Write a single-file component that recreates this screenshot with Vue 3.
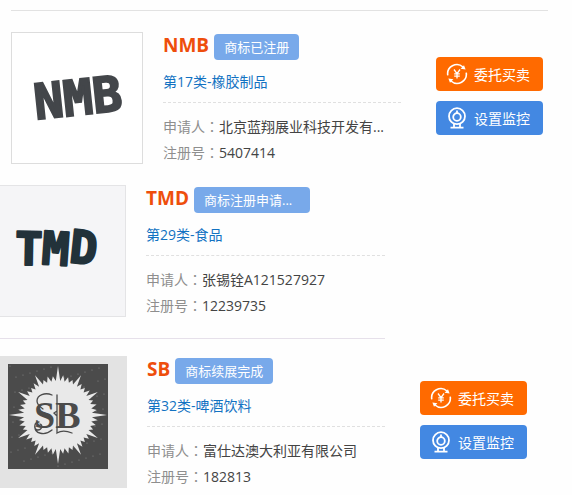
<template>
  <main class="trademark-list">
    <article
      v-for="item in trademarks"
      :key="item.number"
      :class="['trademark', item.id]"
    >
      <div class="thumb">
        <svg v-if="item.id === 'nmb'" viewBox="0 0 130 130" role="img" aria-label="NMB">
          <text class="mark-nmb" x="66" y="82" text-anchor="middle" transform="rotate(-6 66 66)">NMB</text>
        </svg>

        <svg v-else-if="item.id === 'tmd'" viewBox="0 0 125 130" role="img" aria-label="TMD">
          <g class="mark-tmd">
            <text x="15" y="79" transform="rotate(1 30 60)">T</text>
            <text x="42" y="79" transform="rotate(4 55 60)">M</text>
            <text x="70" y="78" transform="rotate(6 85 60)">D</text>
          </g>
        </svg>

        <svg v-else viewBox="0 0 127 132" role="img" aria-label="SB">
          <rect width="127" height="132" fill="#e3e3e3" />
          <rect x="8" y="8" width="100" height="105" fill="#4b4b4b" />
          <circle
            v-for="(dot, i) in specks"
            :key="i"
            :cx="dot.x"
            :cy="dot.y"
            r="0.6"
            fill="#888"
          />
          <polygon :points="sunburst" fill="#e9e9e9" />
          <text class="mark-sb" x="34" y="72">SB</text>
          <g fill="none" stroke="#4b4b4b" stroke-width="1.3" stroke-linecap="round">
            <path d="M52 39c-7-3-15 0-15 6 0 4 3 6 6 8" />
            <path d="M39 66c-5 0-6 8-1 8 4 0 5-5 2-6M35 70c-1 8 10 10 17 4" />
            <path d="M57 39v38c5-3 10-2 15 0M57 60l-3-3 3-2" />
          </g>
        </svg>
      </div>

      <div class="info">
        <header class="heading">
          <h2 class="name">{{ item.name }}</h2>
          <span :class="['status', { 'status-long': item.longStatus }]">{{ item.status }}</span>
        </header>
        <a class="category" href="#">{{ item.category }}</a>
        <dl class="details">
          <div class="detail">
            <dt>申请人<span class="colon">：</span></dt>
            <dd>{{ item.applicant }}</dd>
          </div>
          <div class="detail">
            <dt>注册号<span class="colon">：</span></dt>
            <dd>{{ item.number }}</dd>
          </div>
        </dl>
      </div>

      <div class="actions">
        <template v-if="item.actions">
          <button type="button" class="action trade">
            <svg class="icon" viewBox="0 0 22 22" aria-hidden="true">
              <g fill="none" stroke="#fff" stroke-width="1.6">
                <path d="M1.8 12.4A9.2 9.2 0 0 1 17 4" />
                <path d="M20.2 9.6A9.2 9.2 0 0 1 5 18" />
                <path d="M8 6.5 11 10.6l3-4.1M11 10.6v5M8.2 10.8h5.6M8.2 13.2h5.6" stroke-width="1.3" />
              </g>
              <path d="M19.6 6.6 14.6 5.8 18 2.2zM2.4 15.4l5 .8L4 19.8z" fill="#fff" />
            </svg>
            委托买卖
          </button>
          <button type="button" class="action monitor">
            <svg class="icon" viewBox="0 0 22 22" aria-hidden="true">
              <g fill="none" stroke="#fff" stroke-width="1.8">
                <circle cx="11" cy="9.2" r="8" />
                <circle cx="11" cy="10" r="3.8" />
                <path d="M11 3.4v3M8 16.5v4M14 16.5v4M4.5 20.6h13" />
              </g>
            </svg>
            设置监控
          </button>
        </template>
      </div>
    </article>
  </main>
</template>

<script setup>
const trademarks = [
  {
    id: 'nmb',
    name: 'NMB',
    status: '商标已注册',
    category: '第17类-橡胶制品',
    applicant: '北京蓝翔展业科技开发有...',
    number: '5407414',
    actions: true
  },
  {
    id: 'tmd',
    name: 'TMD',
    status: '商标注册申请...',
    longStatus: true,
    category: '第29类-食品',
    applicant: '张锡铨A121527927',
    number: '12239735',
    actions: false
  },
  {
    id: 'sb',
    name: 'SB',
    status: '商标续展完成',
    category: '第32类-啤酒饮料',
    applicant: '富仕达澳大利亚有限公司',
    number: '182813',
    actions: true
  }
];

// rays alternate between long and short tips around the disc
const RAYS = 48;
const sunburst = Array.from({ length: RAYS * 2 }, (_, i) => {
  const angle = (i * Math.PI) / RAYS - Math.PI / 2;
  let radius = 34;
  if (i % 2 === 0) {
    radius = i % 24 === 0 ? 49 : i % 8 === 0 ? 46 : 38 + (i % 3);
  }
  return `${(58 + radius * Math.cos(angle)).toFixed(1)},${(59 + radius * Math.sin(angle)).toFixed(1)}`;
}).join(' ');

const specks = Array.from({ length: 90 }, (_, i) => ({
  x: 10 + ((i * 37) % 96),
  y: 10 + ((i * 61) % 101)
}));
</script>

<style>
body {
  margin: 0;
  background: #fefefe;
}
</style>

<style scoped>
.trademark-list {
  padding-top: 10px;
  overflow: hidden;
  font-family: "Open Sans", "Noto Sans CJK SC", sans-serif;
  font-size: 14px;
  line-height: 26px;
  color: #444;
}

.trademark {
  display: flex;
  align-items: flex-start;
}
.trademark.nmb {
  margin: 0 24px 0 11px;
  padding: 21px 5px 19px 0;
  border-top: 1px solid #e2e2e2;
}
.trademark.tmd,
.trademark.sb { padding-right: 45px; }
.trademark.sb { padding-top: 37px; position: relative; }

/* divider between the last two records, it stops before the buttons */
.trademark.sb::before {
  content: "";
  position: absolute;
  top: 19px;
  left: 0;
  right: 187px;
  border-top: 1px solid #e6e0ea;
}

/* ---- thumbnails ---- */
.thumb {
  box-sizing: border-box;
  flex: 0 0 132px;
  height: 132px;
  margin-right: 20px;
  border: 1px solid #ddd;
  background: #fff;
}
.thumb svg { display: block; width: 100%; height: 100%; }
.tmd .thumb {
  flex-basis: 126px;
  border-color: #e4e4e6;
  border-left: none;
  background: #f5f5f7;
}
.sb .thumb { flex-basis: 127px; border: none; }

.mark-nmb {
  font: bold 49px "DejaVu Sans Mono", monospace;
  fill: #43464a;
  stroke: #43464a;
  stroke-width: 2;
}
.mark-tmd text {
  font: bold 46px "DejaVu Sans Mono", monospace;
  fill: #22323a;
  stroke: #22323a;
  stroke-width: 2;
  stroke-linejoin: round;
}
.mark-sb {
  font: bold 38px "Liberation Serif", serif;
  fill: #4b4b4b;
}

/* ---- text ---- */
.info { flex: 1; min-width: 0; padding-top: 2px; }

.heading { display: flex; gap: 5px; }
.name {
  margin: 0;
  font-size: 19px;
  font-weight: 700;
  line-height: 22px;
  color: #ee4e0c;
}
.status {
  box-sizing: border-box;
  padding: 0 10px;
  border-radius: 4px;
  background: #78a9ea;
  color: #fff;
  font-size: 13px;
  white-space: nowrap;
}
.status-long { width: 116px; }

.category {
  display: block;
  margin-top: 10px;
  padding-bottom: 8px;
  border-bottom: 1px dashed #e0e0e0;
  line-height: 24px;
  color: #1272c2;
  text-decoration: none;
}

.details { margin: 11px 0 0; }
.detail { display: flex; white-space: nowrap; }
.detail dt { color: #8e8e8e; }
.detail dd { margin: 0; }
.colon { font-family: "Noto Sans CJK TC", sans-serif; line-height: 1; }

/* ---- buttons ---- */
.actions {
  flex: 0 0 107px;
  display: flex;
  flex-direction: column;
  gap: 10px;
  margin: 25px 0 0 35px;
}
.action {
  display: flex;
  align-items: center;
  gap: 6px;
  height: 34px;
  padding: 0 10px;
  border: none;
  border-radius: 4px;
  color: #fff;
  font-family: inherit;
  font-size: 14px;
  white-space: nowrap;
  cursor: pointer;
}
.action.trade { background: #ff6a00; }
.action.monitor { background: #4388e2; }
.icon { flex: none; width: 22px; height: 22px; }
</style>
